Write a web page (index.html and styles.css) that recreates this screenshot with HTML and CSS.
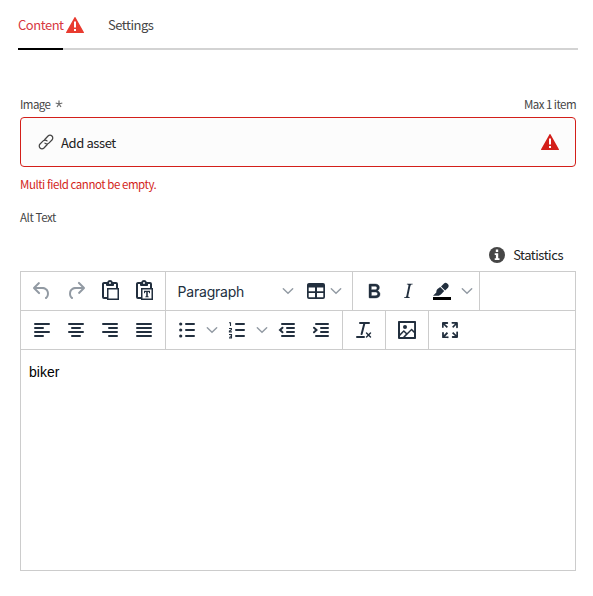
FILE: index.html
```
<!DOCTYPE html>
<html lang="en">
<head>
<meta charset="utf-8">
<title>Content</title>
<link rel="stylesheet" href="styles.css">
</head>
<body>
<svg class="defs" width="0" height="0">
  <symbol id="alert" viewBox="0 0 18 16"><path fill="currentColor" d="M8.400.4a.7.7 0 0 1 1.200 0l8.300 14.800a.5.5 0 0 1-.5.8H.6a.5.5 0 0 1-.5-.8z"/><path fill="#fff" d="M8 4.500h2v6H8zM8 12h2v2H8z"/></symbol>
  <symbol id="chev" viewBox="0 0 16 16"><path d="M3.300 5.700 8 10.300l4.700-4.600" fill="none" stroke="#929aa3" stroke-width="1.400" stroke-linecap="round"/></symbol>
</svg>
<nav class="tabs">
  <a class="tab active">Content <svg class="alert"><use href="#alert"/></svg></a>
  <a class="tab">Settings</a>
</nav>
<main>
  <div class="labels"><span>Image <svg class="star" viewBox="0 0 8 8"><path d="M4 4V.5M4 4 .7 3M4 4l3.300-1M4 4 2 7M4 4l2 3" stroke="#6a6a6a" stroke-width="1.200"/></svg></span><span class="max">Max 1 item</span></div>
  <div class="asset">
    <svg class="link" viewBox="0 0 18 18" fill="none" stroke="#444" stroke-width="1.400" stroke-linecap="round"><path d="M7.600 6.200 11.300 2.300a3.100 3.100 0 0 1 4.400 0 3.100 3.100 0 0 1 0 4.400l-3.500 3.500a3.100 3.100 0 0 1-4.400 0"/><path d="m10.400 11.800-3.700 3.900a3.100 3.100 0 0 1-4.400 0 3.100 3.100 0 0 1 0-4.400l3.500-3.500a3.100 3.100 0 0 1 4.400 0"/></svg>
    <span class="add">Add asset</span>
    <svg class="alert"><use href="#alert"/></svg>
  </div>
  <p class="error">Multi field cannot be empty.</p>
  <p class="alt">Alt Text</p>
  <div class="stats"><svg class="info" viewBox="0 0 16 16"><circle cx="8" cy="8" r="8" fill="#464646"/><path fill="#fff" d="M6.800 2.600h2.400V5H6.800zM5.700 6.300h3.500v5h1.300V13H5.700v-1.700h1.200V8H5.700z"/></svg><span>Statistics</span></div>
  <section class="editor">
    <div class="row">
      <div class="group">
        <button class="muted"><svg viewBox="0 0 24 24"><path d="M6.400 8H12c3.700 0 6.200 2 6.800 5.100.6 2.700-.4 5.600-2.300 6.800a1 1 0 0 1-1-1.800c1.100-.6 1.800-2.700 1.400-4.600-.5-2.100-2.100-3.500-4.900-3.500H6.400l3.300 3.300a1 1 0 1 1-1.400 1.400l-5-5a1 1 0 0 1 0-1.400l5-5a1 1 0 0 1 1.400 1.400L6.400 8Z"/></svg></button>
        <button class="muted"><svg viewBox="0 0 24 24"><path d="M17.600 10H12c-2.800 0-4.400 1.400-4.900 3.500-.4 2 .3 4 1.400 4.600a1 1 0 1 1-1 1.800c-2-1.200-2.900-4.100-2.300-6.800.6-3 3-5.100 6.800-5.100h5.600l-3.300-3.300a1 1 0 1 1 1.400-1.400l5 5a1 1 0 0 1 0 1.400l-5 5a1 1 0 0 1-1.400-1.400l3.300-3.300Z"/></svg></button>
        <button><svg viewBox="0 0 24 24"><path fill-rule="evenodd" d="M18 9V5h-2v1c0 .6-.4 1-1 1H9a1 1 0 0 1-1-1V5H6v13h3V9h9ZM9 20H6a2 2 0 0 1-2-2V5c0-1.100.9-2 2-2h3.200A3 3 0 0 1 12 1a3 3 0 0 1 2.800 2H18a2 2 0 0 1 2 2v4h1v12H9v-1ZM12 3a1 1 0 1 0 0 2 1 1 0 0 0 0-2Zm-1.500 7.500v9h9v-9z"/></svg></button>
        <button><svg viewBox="0 0 24 24"><path fill-rule="evenodd" d="M18 9V5h-2v1c0 .6-.4 1-1 1H9a1 1 0 0 1-1-1V5H6v13h3V9h9ZM9 20H6a2 2 0 0 1-2-2V5c0-1.100.9-2 2-2h3.200A3 3 0 0 1 12 1a3 3 0 0 1 2.800 2H18a2 2 0 0 1 2 2v4h1v12H9v-1ZM12 3a1 1 0 1 0 0 2 1 1 0 0 0 0-2Zm-1.500 7.500v9h9v-9z"/><path d="M12 11.800h6v2.400h-.8l-.5-1.300h-.9v4.400l.9.200v.7h-3.400v-.7l.9-.2v-4.400h-.9l-.5 1.300H12z"/></svg></button>
      </div>
      <div class="group">
        <button class="select"><span>Paragraph</span><svg class="chev"><use href="#chev"/></svg></button>
        <button class="table"><svg viewBox="0 0 24 24"><path fill-rule="evenodd" d="M19 4a2 2 0 0 1 2 2v12a2 2 0 0 1-2 2H5a2 2 0 0 1-2-2V6c0-1.100.9-2 2-2h14ZM4.700 14v4.300H11V14H4.700Zm14.600 0H13v4.300h6.300V14Zm0-5.500H13v3.800h6.300V8.500ZM4.700 12.300H11V8.500H4.700v3.800Z"/></svg></button>
        <button class="arrow"><svg class="chev"><use href="#chev"/></svg></button>
      </div>
      <div class="group">
        <button><svg viewBox="0 0 24 24"><path fill-rule="evenodd" stroke="#222f3e" stroke-width=".4" d="M7.800 19c-.3 0-.5 0-.6-.2l-.2-.5V5.700c0-.2 0-.4.2-.5l.6-.2h5c1.500 0 2.700.3 3.500 1 .7.6 1.100 1.400 1.100 2.500a3 3 0 0 1-.6 1.900c-.4.6-1 1-1.600 1.200.4.1.9.3 1.300.6s.8.7 1 1.200c.4.4.5 1 .5 1.600 0 1.300-.4 2.300-1.300 3-.8.7-2.100 1-3.800 1H7.800Zm5-8.300c.6 0 1.200-.1 1.600-.5.4-.3.6-.7.6-1.300 0-1.100-.8-1.700-2.300-1.700H9.300v3.500h3.400Zm.5 6c.7 0 1.300-.1 1.700-.4.4-.4.6-.9.6-1.500s-.2-1-.7-1.400c-.4-.3-1-.4-2-.4H9.400v3.800h4Z"/></svg></button>
        <button><svg viewBox="0 0 24 24"><path d="m16.700 4.700-.1.9h-.3c-.6 0-1 0-1.400.3-.3.3-.4.6-.5 1.100l-2.100 9.800v.6c0 .5.4.8 1.400.8h.2l-.2.8H8l.2-.8h.2c1.100 0 1.800-.5 2-1.500l2-9.800.1-.5c0-.6-.4-.8-1.400-.8h-.3l.2-.9h5.700Z"/></svg></button>
        <button><svg viewBox="0 0 24 24"><path fill="#000" d="M3 18h18v3H3z"/><path d="M8.700 16.700H3l3.300-3.300c0-1.500.3-2.700 1.200-3.500L10.200 8l4 4.100-2.800 3c-.8.8-1.700 1.100-2.700 1.600ZM11 7.400l3-2.900a2.500 2.500 0 0 1 3.200 0L18 5.300c.9.9.9 2.500 0 3.400l-2.900 2.900z"/></svg></button>
        <button class="arrow"><svg class="chev"><use href="#chev"/></svg></button>
      </div>
    </div>
    <div class="row">
      <div class="group">
        <button><svg viewBox="0 0 24 24"><path class="line" d="M5 6h14M5 10h8M5 14h14M5 18h8"/></svg></button>
        <button><svg viewBox="0 0 24 24"><path class="line" d="M5 6h14M8 10h8M5 14h14M8 18h8"/></svg></button>
        <button><svg viewBox="0 0 24 24"><path class="line" d="M5 6h14M11 10h8M5 14h14M11 18h8"/></svg></button>
        <button><svg viewBox="0 0 24 24"><path class="line" d="M5 6h14M5 10h14M5 14h14M5 18h14"/></svg></button>
      </div>
      <div class="group">
        <button><svg viewBox="0 0 24 24"><path class="line" d="M11 6h8M11 12h8M11 18h8"/><circle cx="5.700" cy="6" r="1.600"/><circle cx="5.700" cy="12" r="1.600"/><circle cx="5.700" cy="18" r="1.600"/></svg></button>
        <button class="arrow"><svg class="chev"><use href="#chev"/></svg></button>
        <button><svg viewBox="0 0 24 24"><path class="line" d="M11 6h8M11 12h8M11 18h8"/><path fill="none" stroke="#222f3e" stroke-width="1.100" d="M4 4.700h1.500V8M4 10.500h2.400v1.300L4.400 13v.9h2.500M4 16.500h2.500v3.400H4M4.700 18.200h1.800"/></svg></button>
        <button class="arrow"><svg class="chev"><use href="#chev"/></svg></button>
        <button><svg viewBox="0 0 24 24"><path class="line" d="M7 6h12M12 10h7M12 14h7M7 18h12"/><path fill="none" stroke="#222f3e" stroke-width="2" stroke-linecap="round" d="M7.500 9.700 5 12l2.500 2.300"/></svg></button>
        <button><svg viewBox="0 0 24 24"><path class="line" d="M7 6h12M12 10h7M12 14h7M7 18h12"/><path fill="none" stroke="#222f3e" stroke-width="2" stroke-linecap="round" d="M5 9.700 7.500 12 5 14.300"/></svg></button>
      </div>
      <div class="group">
        <button><svg viewBox="0 0 24 24"><path d="M13.200 6a1 1 0 0 1 0 .2l-2.600 10a1 1 0 0 1-1 .8h-.2a.8.8 0 0 1-.8-1l2.600-10H8a1 1 0 1 1 0-2h9a1 1 0 0 1 0 2h-3.800ZM5 18h7a1 1 0 0 1 0 2H5a1 1 0 0 1 0-2Zm13 1.500L16.500 18 15 19.500a.7.7 0 0 1-1-1l1.500-1.500-1.500-1.500a.7.7 0 0 1 1-1l1.500 1.500 1.500-1.500a.7.7 0 0 1 1 1L17.500 17l1.500 1.500a.7.7 0 0 1-1 1Z"/></svg></button>
      </div>
      <div class="group">
        <button><svg viewBox="0 0 24 24"><path fill-rule="evenodd" d="m5 15.700 3.300-3.200c.3-.3.700-.3 1 0L12 15l4.100-4c.3-.4.800-.4 1 0l2 1.900V5H5v10.700ZM5 18v1h3l2.800-2.900-2-2L5 17.900Zm14-3-2.500-2.400-6.400 6.500H19v-4ZM4 3h16c.6 0 1 .4 1 1v16c0 .6-.4 1-1 1H4a1 1 0 0 1-1-1V4c0-.6.4-1 1-1Z"/><circle cx="10" cy="9" r="2"/></svg></button>
      </div>
      <div class="group last">
        <button><svg viewBox="0 0 24 24"><path d="m15.300 10-1.200-1.300 2.900-3h-2.300a.9.9 0 1 1 0-1.700H19c.5 0 .9.4.9.9v4.400a.9.9 0 1 1-1.800 0V7l-2.900 3Zm0 4 3 3v-2.300a.9.9 0 1 1 1.700 0V19c0 .5-.4.9-.9.9h-4.400a.9.9 0 1 1 0-1.800H17l-3-2.900 1.300-1.200ZM10 15.400l-2.900 3h2.300a.9.9 0 1 1 0 1.700H5a.9.9 0 0 1-.9-.9v-4.400a.9.9 0 1 1 1.800 0V17l2.900-3 1.200 1.300ZM8.700 10 5.700 7v2.300a.9.9 0 0 1-1.700 0V5c0-.5.4-.9.9-.9h4.400a.9.9 0 0 1 0 1.800H7l3 2.900-1.300 1.200Z"/></svg></button>
      </div>
    </div>
    <div class="body">biker</div>
  </section>
</main>
</body>
</html>
```
FILE: styles.css
```
* { box-sizing: border-box; }
body { margin: 0; background: #fff; color: #464646; font-family: "Noto Sans CJK SC", "Noto Sans", sans-serif; font-size: 13px; letter-spacing: -0.47px; }
p { margin: 0; }
svg { display: block; flex: none; }
.defs { position: absolute; }
.tabs { display: flex; margin: 0 15px 0 18px; height: 50px; border-bottom: 2px solid #d3d3d3; gap: 24px; }
.tab { display: flex; align-items: flex-start; height: 50px; padding-top: 15px; line-height: 20px; white-space: pre; }
.tab.active { color: #d7373f; width: 66px; background: linear-gradient(#000, #000) 0 100% / 45px 2px no-repeat; }
.alert { width: 18px; height: 16px; color: #d31f1a; }
.tab .alert { color: #e93b30; margin: 2px 0 0 auto; }
main { padding: 46px 17px 0 20px; }
.labels { display: flex; justify-content: space-between; height: 21px; line-height: 16px; font-size: 11.5px; letter-spacing: -0.55px; }
.labels span { display: flex; gap: 5px; white-space: nowrap; }
.star { width: 8px; height: 8px; margin-top: 4px; }
.asset { display: flex; align-items: center; height: 50px; border: 1px solid #d31f1a; border-radius: 4px; background: #fcfcfc; padding: 0 16px 0 17px; gap: 7px; color: #222; letter-spacing: -0.39px; }
.link { width: 16px; height: 16px; }
.asset .alert { margin-left: auto; }
.error { color: #d31f1a; font-size: 11.5px; letter-spacing: -0.45px; line-height: 16px; margin-top: 9px; }
.alt { font-size: 11.5px; letter-spacing: -0.4px; line-height: 16px; margin-top: 17px; }
.stats { display: flex; justify-content: flex-end; gap: 8px; height: 16px; line-height: 16px; margin-top: 22px; padding-right: 13px; color: #222; }
.info { width: 16px; height: 16px; }
.editor { margin-top: 8px; border: 1px solid #ccc; height: 300px; letter-spacing: 0; }
.row { display: flex; height: 39px; border-bottom: 1px solid #ccc; }
.group { display: flex; padding: 0 4px; border-right: 1px solid #ccc; }
.group.last { border: 0; }
button { width: 34px; border: 0; padding: 0; background: none; display: flex; align-items: center; justify-content: center; color: #222f3e; font: 14px Inter, sans-serif; }
button svg { width: 24px; height: 24px; fill: #222f3e; }
button.muted svg { fill: #929aa3; }
button .chev, button.arrow { width: 16px; }
button .chev { height: 16px; }
button.select { width: 130px; justify-content: space-between; padding: 0 8px 0 7.5px; letter-spacing: -0.2px; }
button.select .chev { margin-right: -4px; }
button.select span { padding-top: 1px; }
button.table { width: 32px; }
.group button.table + .arrow { width: 8px; margin-right: 8px; }
.line { fill: none; stroke: #222f3e; stroke-width: 2; stroke-linecap: round; }
.body { padding: 14px 8px; font: 14px/17px "Liberation Sans", Arial, sans-serif; color: #000; }
```
